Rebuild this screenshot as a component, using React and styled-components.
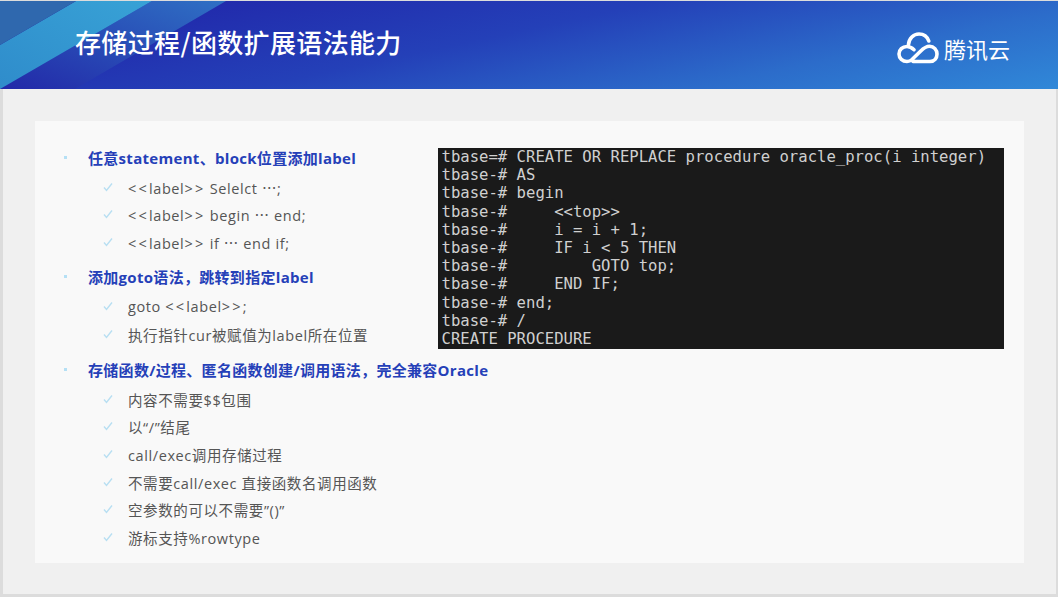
import React from 'react';
import styled, { createGlobalStyle } from 'styled-components';

const GlobalStyle = createGlobalStyle`
    html, body {
        margin: 0;
        padding: 0;
        background: #dcdcdc;
    }
    #root {
        width: 1058px;
        height: 597px;
        overflow: hidden;
    }
`;

const Page = styled.div`
    box-sizing: border-box;
    width: 1058px;
    height: 597px;
    padding: 1px 2px 3px 3px;
`;

const Slide = styled.div`
    height: 100%;
    display: flex;
    flex-direction: column;
    background: #f0f0f0;
`;

const Header = styled.header`
    position: relative;
    flex: none;
    height: 88px;
    margin-left: -3px;
    margin-right: -2px;
    display: flex;
    align-items: center;
    justify-content: space-between;
    padding: 0 48px 0 75px;
    background: linear-gradient(168deg, #2020a6 0%, #2440b8 45%, #2c6cca 75%, #3088d8 100%);
    overflow: hidden;
`;

const Stripes = styled.svg`
    position: absolute;
    left: 0;
    top: 0;
`;

const Title = styled.h1`
    position: relative;
    margin: 0 0 7px;
    color: #fff;
    font: 500 26px "Noto Sans CJK SC", sans-serif;
    letter-spacing: 0.35px;
`;

const Logo = styled.div`
    display: flex;
    align-items: center;
    gap: 5px;
    margin-top: 6px;
    color: #fff;
    font: 400 22px "Noto Sans CJK SC", sans-serif;
`;

const Body = styled.main`
    flex: 1;
    display: flex;
    padding: 32px 32px 31px;
`;

const Card = styled.section`
    flex: 1;
    min-width: 0;
    display: flex;
    align-items: flex-start;
    background: #f9f9f9;
    padding: 26px 20px 0 0;
`;

const Outline = styled.div`
    flex: 1;
    min-width: 0;
    display: flex;
    flex-direction: column;
`;

const Topic = styled.div`
    display: flex;
    align-items: center;
    height: 20px;
    margin-top: ${(props) => props.$gap}px;
    padding-left: 53px;
    color: #2540b8;
    font: 700 15px "Open Sans", "Noto Sans CJK SC", sans-serif;
    letter-spacing: 0.3px;
    white-space: pre;
`;

const Dot = styled.i`
    flex: none;
    width: 3px;
    height: 3px;
    margin-left: -24px;
    margin-right: 21px;
    background: #b5e0f5;
`;

const Item = styled.div`
    display: flex;
    align-items: center;
    height: 20px;
    margin-top: ${(props) => props.$gap}px;
    padding-left: 67px;
    color: #555;
    font: 400 14.5px "Open Sans", "Noto Sans CJK SC", sans-serif;
    letter-spacing: 0.6px;
    white-space: pre;
`;

const Check = styled.svg`
    flex: none;
    width: 10px;
    height: 10px;
    margin-left: 1px;
    margin-right: 15px;
`;

const Angle = styled.span`
    letter-spacing: 2.2px;
`;

const Dots = styled.span`
    font-family: "Noto Sans CJK SC", sans-serif;
`;

const Terminal = styled.pre`
    flex: none;
    width: 566px;
    height: 201px;
    box-sizing: border-box;
    margin: 1px 0 0;
    padding: 0 0 0 3.5px;
    background: #1a1a1a;
    color: #d0d0d0;
    font: 400 15.6px/18.2px "DejaVu Sans Mono", monospace;
    overflow: hidden;
`;

const sections = [
    {
        title: '任意statement、block位置添加label',
        gap: 0,
        items: [
            ['<<label>> Selelct …;', 10],
            ['<<label>> begin … end;', 7],
            ['<<label>> if … end if;', 8],
        ],
    },
    {
        title: '添加goto语法，跳转到指定label',
        gap: 14,
        items: [
            ['goto <<label>>;', 10],
            ['执行指针cur被赋值为label所在位置', 8],
        ],
    },
    {
        title: '存储函数/过程、匿名函数创建/调用语法，完全兼容Oracle',
        gap: 15,
        items: [
            ['内容不需要$$包围', 10],
            ['以“/”结尾', 7],
            ['call/exec调用存储过程', 8],
            ['不需要call/exec 直接函数名调用函数', 8],
            ['空参数的可以不需要”()”', 7],
            ['游标支持%rowtype', 8],
        ],
    },
];

const sql = `tbase=# CREATE OR REPLACE procedure oracle_proc(i integer)
tbase-# AS
tbase-# begin
tbase-#     <<top>>
tbase-#     i = i + 1;
tbase-#     IF i < 5 THEN
tbase-#         GOTO top;
tbase-#     END IF;
tbase-# end;
tbase-# /
CREATE PROCEDURE`;

// the slide font draws << >> wider and the ellipsis centred, so those bits get their own span
const renderItemText = (text) => text.split(/(<<|>>|…)/).map((part, index) => {
    if (part === '<<' || part === '>>') return <Angle key={index}>{part}</Angle>;
    if (part === '…') return <Dots key={index} lang="zh-CN">{part}</Dots>;
    return part;
});

const App = () => {
    return (
        <Page>
            <GlobalStyle />
            <Slide>
                <Header>
                    <Stripes width="240" height="88" viewBox="0 0 240 88">
                        <defs>
                            <linearGradient id="band" x1="0" y1="1" x2="1" y2="0">
                                <stop offset="0" stopColor="#2f8ccb" />
                                <stop offset="1" stopColor="#38a2d6" />
                            </linearGradient>
                            <linearGradient id="fade" x1="0" y1="1" x2="1" y2="0">
                                <stop offset="0" stopColor="#2228a8" />
                                <stop offset="1" stopColor="#2f70c4" />
                            </linearGradient>
                        </defs>
                        <polygon points="152,0 226,0 75,88 0,88" fill="url(#fade)" />
                        <polygon points="0,44 76,0 152,0 0,88" fill="url(#band)" />
                        <polygon points="0,0 76,0 0,44" fill="#2f68ae" />
                    </Stripes>
                    <Title>存储过程/函数扩展语法能力</Title>
                    <Logo>
                        <svg width="42" height="32" viewBox="0 0 42 32" fill="none" stroke="#fff" strokeWidth="3.6" strokeLinecap="round">
                            <path d="M11.5 12.5C12 6.5 16.5 2 22 2c4.5 0 8.3 2.8 9.8 7" />
                            <path d="M16 29.500h17c4.500 0 7-3.500 7-7.500s-3-7.800-7.500-7.800c-4 0-6.300 2.300-9 5L15 27.500c-1.500 1.300-2.800 2-5 2-4.500 0-8-3.200-8-7.500s3.500-7.500 8-7.500c3 0 5 1.300 7 3.200" />
                        </svg>
                        <span>腾讯云</span>
                    </Logo>
                </Header>
                <Body>
                    <Card>
                        <Outline>
                            {sections.map((section) => (
                                <React.Fragment key={section.title}>
                                    <Topic $gap={section.gap}>
                                        <Dot />
                                        {section.title}
                                    </Topic>
                                    {section.items.map(([text, gap]) => (
                                        <Item key={text} $gap={gap}>
                                            <Check viewBox="0 0 10 10" fill="none" stroke="#b8dff2" strokeWidth="1.4">
                                                <path d="M1 5.500 3.500 8.500 9 1.500" />
                                            </Check>
                                            <span>{renderItemText(text)}</span>
                                        </Item>
                                    ))}
                                </React.Fragment>
                            ))}
                        </Outline>
                        <Terminal>{sql}</Terminal>
                    </Card>
                </Body>
            </Slide>
        </Page>
    );
};

export default App;
